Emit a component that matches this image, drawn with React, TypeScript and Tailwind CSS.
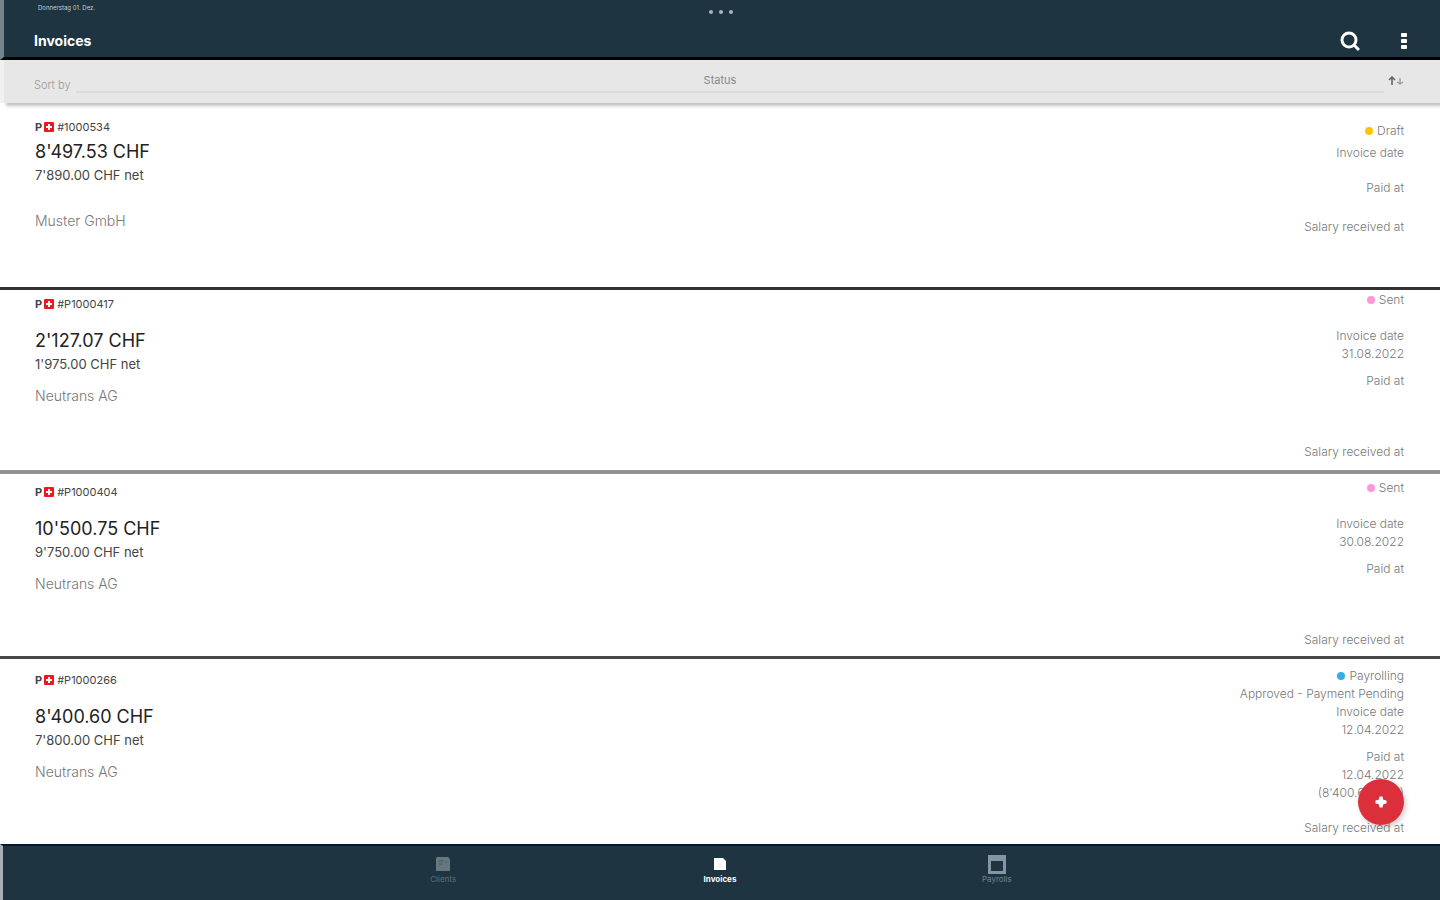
import React, { useState } from 'react';

const invoices = [
  {
    number: '#1000534',
    total: "8'497.53 CHF",
    net: "7'890.00 CHF net",
    client: 'Muster GmbH',
    status: 'Draft',
    dot: 'bg-[#ffc400]',
    detail: '',
    invoiceDate: '',
    paidAt: '',
    paidAmount: '',
    compact: true,
    row: 'h-[187px] pt-[15px] border-b-3 border-[#333333]',
  },
  {
    number: '#P1000417',
    total: "2'127.07 CHF",
    net: "1'975.00 CHF net",
    client: 'Neutrans AG',
    status: 'Sent',
    dot: 'bg-[#ff96d8]',
    detail: '',
    invoiceDate: '31.08.2022',
    paidAt: '',
    paidAmount: '',
    compact: false,
    row: 'h-[184px] pt-px border-b-4 border-[#919191]',
  },
  {
    number: '#P1000404',
    total: "10'500.75 CHF",
    net: "9'750.00 CHF net",
    client: 'Neutrans AG',
    status: 'Sent',
    dot: 'bg-[#ff96d8]',
    detail: '',
    invoiceDate: '30.08.2022',
    paidAt: '',
    paidAmount: '',
    compact: false,
    row: 'h-[185px] pt-[5px] border-b-3 border-[#484848]',
  },
  {
    number: '#P1000266',
    total: "8'400.60 CHF",
    net: "7'800.00 CHF net",
    client: 'Neutrans AG',
    status: 'Payrolling',
    dot: 'bg-[#35aee2]',
    detail: 'Approved - Payment Pending',
    invoiceDate: '12.04.2022',
    paidAt: '12.04.2022',
    paidAmount: "(8'400.60 CHF)",
    compact: false,
    row: 'h-[185px] pt-2',
  },
];

const SwissFlag = () => (
  <svg viewBox="0 0 10 10" className="w-[10px] h-[10px]" aria-hidden="true">
    <rect width="10" height="10" rx="1" fill="#f5141c" />
    <path d="M4 2h2v2h2v2H6v2H4V6H2V4h2z" fill="#fff" />
  </svg>
);

const ClientsIcon = () => (
  <svg viewBox="0 0 16 16" className="w-4 h-4" aria-hidden="true">
    <path d="M2 1h11l2 2v12H1V2z" fill="#65777f" />
    <path d="M4 5h5M4 8h4M10 7l2-2" stroke="#465a64" strokeWidth="1" />
  </svg>
);

const InvoicesIcon = () => (
  <svg viewBox="0 0 16 16" className="w-4 h-4" aria-hidden="true">
    <path d="M2 2h9l3 3v9H2z" fill="#ffffff" />
    <path d="M8 6v5" stroke="#e3e3e8" strokeWidth="1" />
  </svg>
);

const PayrollsIcon = () => (
  <svg viewBox="0 0 20 20" className="w-5 h-5" aria-hidden="true">
    <path d="M1 1h18v19H1zM4 7v10h12V7z" fill="#8496a1" fillRule="evenodd" />
  </svg>
);

const tabs = [
  { name: 'Clients', icon: <ClientsIcon />, style: 'text-[#5d707a]' },
  { name: 'Invoices', icon: <InvoicesIcon />, style: 'text-white font-bold' },
  { name: 'Payrolls', icon: <PayrollsIcon />, style: 'text-[#71848f]' },
];

const InvoiceRow = ({ invoice }: { invoice: any }) => {
  return (
    <li className={`flex justify-between pl-[35px] pr-9 ${invoice.row}`}>
      <div className="text-[#444444]">
        <div className={`flex items-center text-[11px] leading-[18px] ${invoice.compact ? '' : 'pt-1'}`}>
          <b className="pr-[2px]">P</b>
          <SwissFlag />
          <span className="pl-[3px]">{invoice.number}</span>
        </div>
        <p className={`text-[18px] leading-6 text-[#222222] ${invoice.compact ? 'mt-1' : 'mt-4'}`}>{invoice.total}</p>
        <p className="text-[13px] leading-[22px]">{invoice.net}</p>
        <p className={`text-[14px] leading-6 font-light text-[#777777] ${invoice.compact ? 'mt-[23px]' : 'mt-[9px]'}`}>
          {invoice.client}
        </p>
      </div>

      <div
        className={`text-right text-[12px] leading-[18px] font-light text-[#777777] ${invoice.compact ? 'pt-1' : ''}`}
      >
        <p className="flex items-center justify-end gap-1">
          <span className={`w-2 h-2 rounded-full ${invoice.dot}`} />
          {invoice.status}
        </p>
        {!invoice.compact && <p className="h-[18px]">{invoice.detail}</p>}
        <p className={invoice.compact ? 'mt-1' : ''}>Invoice date</p>
        {!invoice.compact && <p className="h-[18px]">{invoice.invoiceDate}</p>}
        <p className={invoice.compact ? 'mt-[17px]' : 'mt-[9px]'}>Paid at</p>
        {!invoice.compact && <p className="h-[18px]">{invoice.paidAt}</p>}
        {!invoice.compact && <p className="h-[18px]">{invoice.paidAmount}</p>}
        <p className={invoice.compact ? 'mt-[21px]' : 'mt-[17px]'}>Salary received at</p>
      </div>
    </li>
  );
};

const App = () => {
  const [sortBy, setSortBy] = useState<string>('Status');
  const [activeTab, setActiveTab] = useState<string>('Invoices');

  return (
    <div className="relative min-h-screen flex flex-col bg-white font-['Inter','Liberation_Sans',sans-serif]">
      <header className="h-[60px] flex flex-col bg-[#1e3440] border-l-4 border-l-[#73848b] border-b-3 border-b-black">
        <div className="grid shrink-0 grid-cols-3 items-center h-6 pl-[34px] pr-9">
          <span className="text-[6px] leading-4 pb-2 text-[#c5ced2]">Donnerstag 01. Dez.</span>
          <span className="flex justify-center gap-[6px]">
            <i className="w-1 h-1 rounded-full bg-[#a9b6bc]" />
            <i className="w-1 h-1 rounded-full bg-[#a9b6bc]" />
            <i className="w-1 h-1 rounded-full bg-[#a9b6bc]" />
          </span>
        </div>
        <div className="flex flex-1 items-center justify-between pl-[30px] pr-8">
          <h1 className="text-[14px] leading-5 font-bold text-white">Invoices</h1>
          <div className="flex items-center gap-10">
            <button aria-label="Search">
              <svg viewBox="0 0 20 20" className="w-5 h-5" fill="none" stroke="#fff">
                <circle cx="9" cy="9" r="7" strokeWidth="3" />
                <path d="M14 14l5 5" strokeWidth="3" />
              </svg>
            </button>
            <button aria-label="More options">
              <svg viewBox="0 0 8 18" className="w-2 h-[18px]" fill="#fff">
                <rect x="1" y="1" width="6" height="4" rx="1" />
                <rect x="1" y="7" width="6" height="4" rx="1" />
                <rect x="1" y="13" width="6" height="4" rx="1" />
              </svg>
            </button>
          </div>
        </div>
      </header>

      <div className="h-[43px] flex items-start pl-[30px] pr-9 bg-[#e7e7e7] border-l-4 border-[#f1f1f1] shadow-[6px_3px_3px_#c4c4c4]">
        <label htmlFor="sort" className="w-[42px] pt-[15px] text-[11px] leading-5 font-light text-[#999999]">
          Sort by
        </label>
        <select
          id="sort"
          value={sortBy}
          onChange={(e) => setSortBy(e.target.value)}
          className="flex-1 h-[33px] pt-[10px] pr-5 appearance-none border-b-2 border-[#dcdcdc] text-center text-[11px] [text-align-last:center] text-[#888888]"
        >
          <option value="Status">Status</option>
          <option value="Date">Date</option>
        </select>
        <button aria-label="Change sort direction" className="pt-4 pl-1">
          <svg viewBox="0 0 16 10" className="w-4 h-[10px]" fill="none">
            <path d="M4 9V1M1 4l3-3 3 3" stroke="#666666" strokeWidth="1.6" />
            <path d="M12 2v6M9 6l3 2 3-2" stroke="#999999" strokeWidth="1.3" />
          </svg>
        </button>
      </div>

      <ul>
        {invoices.map((invoice) => (
          <InvoiceRow key={invoice.number} invoice={invoice} />
        ))}
      </ul>

      <button
        aria-label="Add invoice"
        className="absolute right-9 bottom-[75px] w-[46px] h-[46px] flex items-center justify-center rounded-full bg-[#dc2f3c] shadow-[2px_3px_5px_#00000030]"
      >
        <svg viewBox="0 0 12 12" className="w-3 h-3" fill="#fff">
          <path d="M4.500 0.500h3l.8 3.200 3.200.8v3l-3.200.8-.8 3.200h-3l-.8-3.200-3.200-.8v-3l3.200-.8z" />
        </svg>
      </button>

      <nav className="flex-1 min-h-14 bg-[#1e3440] border-l-3 border-l-[#a9b0b5] border-t-2 border-t-[#021a2b]">
        <div className="grid grid-cols-3 w-[58%] mx-auto pr-[3px]">
          {tabs.map((tab) => (
            <button
              key={tab.name}
              aria-current={activeTab === tab.name}
              onClick={() => setActiveTab(tab.name)}
              className={`flex flex-col items-center pt-2 text-[8px] leading-[10px] ${tab.style}`}
            >
              <span className="flex h-5 items-center">{tab.icon}</span>
              {tab.name}
            </button>
          ))}
        </div>
      </nav>
    </div>
  );
};

export default App;
